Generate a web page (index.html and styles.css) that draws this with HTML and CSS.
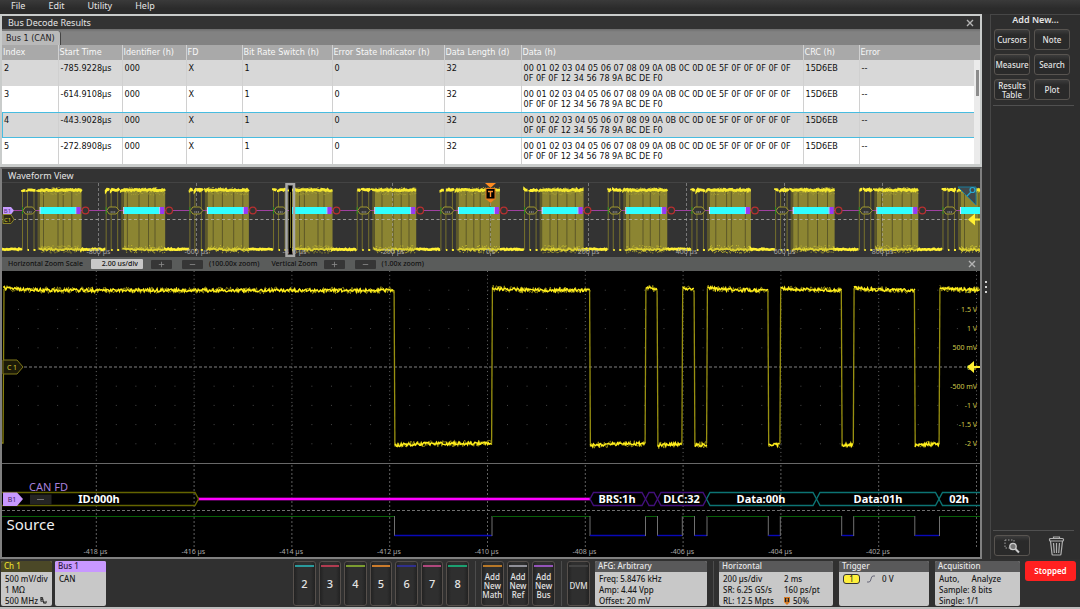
FILE: index.html
```html
<!DOCTYPE html>
<html lang="en">
<head>
<meta charset="utf-8">
<title>Bus Decode Results</title>
<link rel="stylesheet" href="styles.css">
</head>
<body>
<nav class="menubar">
  <button class="menu">File</button>
  <button class="menu">Edit</button>
  <button class="menu">Utility</button>
  <button class="menu">Help</button>
</nav>

<div class="main">
  <main class="workspace">
    <section class="results">
      <header class="titlebar">
        <h2 class="title">Bus Decode Results</h2>
        <button class="close" aria-label="Close results">
          <svg viewBox="0 0 8 8" class="x-icon"><path d="M1 1L7 7M7 1L1 7"/></svg>
        </button>
      </header>
      <div class="tabs"><button class="tab">Bus 1 (CAN)</button></div>
      <div class="table-wrap">
        <table class="decode">
          <colgroup>
            <col class="c-index"><col class="c-time"><col class="c-id"><col class="c-fd"><col class="c-brs">
            <col class="c-esi"><col class="c-len"><col class="c-data"><col class="c-crc"><col>
          </colgroup>
          <thead>
            <tr><th>Index</th><th>Start Time</th><th>Identifier (h)</th><th>FD</th><th>Bit Rate Switch (h)</th><th>Error State Indicator (h)</th><th>Data Length (d)</th><th>Data (h)</th><th>CRC (h)</th><th>Error</th></tr>
          </thead>
          <tbody>
            <tr><td>2</td><td>-785.9228µs</td><td>000</td><td>X</td><td>1</td><td>0</td><td>32</td><td>00 01 02 03 04 05 06 07 08 09 0A 0B 0C 0D 0E 5F 0F 0F 0F 0F 0F<br>0F 0F 0F 12 34 56 78 9A BC DE F0</td><td>15D6EB</td><td>--</td></tr>
            <tr><td>3</td><td>-614.9108µs</td><td>000</td><td>X</td><td>1</td><td>0</td><td>32</td><td>00 01 02 03 04 05 06 07 08 09 0A 0B 0C 0D 0E 5F 0F 0F 0F 0F 0F<br>0F 0F 0F 12 34 56 78 9A BC DE F0</td><td>15D6EB</td><td>--</td></tr>
            <tr class="selected"><td>4</td><td>-443.9028µs</td><td>000</td><td>X</td><td>1</td><td>0</td><td>32</td><td>00 01 02 03 04 05 06 07 08 09 0A 0B 0C 0D 0E 5F 0F 0F 0F 0F 0F<br>0F 0F 0F 12 34 56 78 9A BC DE F0</td><td>15D6EB</td><td>--</td></tr>
            <tr><td>5</td><td>-272.8908µs</td><td>000</td><td>X</td><td>1</td><td>0</td><td>32</td><td>00 01 02 03 04 05 06 07 08 09 0A 0B 0C 0D 0E 5F 0F 0F 0F 0F 0F<br>0F 0F 0F 12 34 56 78 9A BC DE F0</td><td>15D6EB</td><td>--</td></tr>
          </tbody>
        </table>
        <div class="scroll-track"><div class="scroll-thumb"></div></div>
      </div>
    </section>

    <section class="wave">
      <header class="titlebar wave-title"><h2 class="title">Waveform View</h2></header>
      <svg class="plot overview" id="overview" viewBox="2 183 978 74"></svg>
      <div class="zoombar">
        <label class="zoom-label" for="hscale">Horizontal Zoom Scale</label>
        <input class="zoom-input" id="hscale" value="2.00 us/div">
        <button class="step" aria-label="Zoom in horizontally"><svg viewBox="0 0 9 9"><path d="M4.500 1V8M1 4.500H8"/></svg></button>
        <button class="step" aria-label="Zoom out horizontally"><svg viewBox="0 0 9 9"><path d="M1 4.500H8"/></svg></button>
        <span class="zoom-label">(100.00x zoom)</span>
        <span class="zoom-label vertical">Vertical Zoom</span>
        <button class="step" aria-label="Zoom in vertically"><svg viewBox="0 0 9 9"><path d="M4.500 1V8M1 4.500H8"/></svg></button>
        <button class="step" aria-label="Zoom out vertically"><svg viewBox="0 0 9 9"><path d="M1 4.500H8"/></svg></button>
        <span class="zoom-label">(1.00x zoom)</span>
        <button class="close zoom-close" aria-label="Close zoom">
          <svg viewBox="0 0 8 8" class="x-icon"><path d="M1 1L7 7M7 1L1 7"/></svg>
        </button>
      </div>
      <svg class="plot detail" id="detail" viewBox="2 271 978 286"></svg>
    </section>
  </main>

  <div class="splitter"><i class="dot"></i><i class="dot"></i><i class="dot"></i></div>

  <aside class="side">
    <h2 class="side-title">Add New...</h2>
    <div class="side-grid">
      <button class="key">Cursors</button>
      <button class="key">Note</button>
      <button class="key">Measure</button>
      <button class="key">Search</button>
      <button class="key">Results Table</button>
      <button class="key">Plot</button>
    </div>
    <div class="side-tools">
      <button class="key" aria-label="Zoom to region">
        <svg class="tool-icon" viewBox="0 0 18 16">
          <path d="M2 2H11V10H2Z" fill="none" stroke="#a0a0a0" stroke-dasharray="1.500 1.500"/>
          <circle cx="10" cy="8.500" r="3.200" fill="#777" stroke="#ccc" stroke-width="1.300"/>
          <path d="M12.500 11L16 14.500" stroke="#ccc" stroke-width="2"/>
        </svg>
      </button>
      <button class="trash" aria-label="Delete">
        <svg viewBox="0 0 17 20">
          <g fill="none" stroke="#b0b0b0" stroke-width="1.200">
            <path d="M5.500 2.500V1H11.500V2.500"/><rect x="1.500" y="2.500" width="14" height="2.500" rx="1"/>
            <path d="M2.500 5L4 18Q4 19 5 19H12Q13 19 13 18L14.500 5M5.500 7L6.300 17M8.500 7V17M11.500 7L10.700 17"/>
          </g>
        </svg>
      </button>
    </div>
  </aside>
</div>

<footer class="bottombar">
  <section class="badge ch1">
    <h3 class="badge-head">Ch 1</h3>
    <div class="badge-body"><span>500 mV/div</span><span>1 MΩ</span><span>500 MHz <svg class="bw" viewBox="0 0 8 8"><path d="M1 0V5M1 .6H3V2.500H1M1 2.500H3.500V4.800H1M4 4.500V7H5.500V5M5.500 7H7V4.500" fill="none" stroke="#222"/></svg></span></div>
  </section>
  <section class="badge bus1">
    <h3 class="badge-head">Bus 1</h3>
    <div class="badge-body"><span>CAN</span></div>
  </section>

  <div class="channels">
    <button class="chan teal">2</button><button class="chan red">3</button><button class="chan olive">4</button><button class="chan orange">5</button><button class="chan blue">6</button><button class="chan pink">7</button><button class="chan green">8</button>
  </div>
  <i class="sep"></i>
  <div class="adders">
    <button class="chan small amber">Add New Math</button><button class="chan small grey">Add New Ref</button><button class="chan small violet">Add New Bus</button>
  </div>
  <i class="sep"></i>
  <button class="chan small dvm dark">DVM</button>
  <section class="badge afg">
    <h3 class="badge-head">AFG: Arbitrary</h3>
    <div class="badge-body"><span>Freq: 5.8476 kHz</span><span>Amp: 4.44 Vpp</span><span>Offset: 20 mV</span></div>
  </section>
  <i class="sep"></i>
  <section class="badge horizontal">
    <h3 class="badge-head">Horizontal</h3>
    <div class="badge-body two">
      <span>200 µs/div</span><span>2 ms</span>
      <span>SR: 6.25 GS/s</span><span>160 ps/pt</span>
      <span>RL: 12.5 Mpts</span><span><svg class="tpos" viewBox="0 0 6 8"><path d="M0 0H6V5L3 8L0 5Z" fill="#d87820"/><path d="M1 1H5V5H1Z" fill="#222"/><path d="M2 2H4M3 2V5" stroke="#ffa040" fill="none"/></svg>50%</span>
    </div>
  </section>
  <section class="badge trigger">
    <h3 class="badge-head">Trigger</h3>
    <div class="badge-body"><div class="trig-row"><b class="source">1</b><svg class="slope" viewBox="0 0 10 8"><path d="M1 7H3Q4.500 7 5 4Q5.500 1 7 1H9" fill="none" stroke="#667"/></svg><span>0 V</span></div></div>
  </section>
  <section class="badge acquisition">
    <h3 class="badge-head">Acquisition</h3>
    <div class="badge-body"><span class="spread">Auto,<span>Analyze</span></span><span>Sample: 8 bits</span><span>Single: 1/1</span></div>
  </section>
  <button class="stopped">Stopped</button>
</footer>
<script src="plots.js"></script>
</body>
</html>
```
FILE: styles.css
```css
* { box-sizing: border-box; }
body {
  margin: 0;
  min-height: 100vh;
  display: flex;
  flex-direction: column;
  background: #303030;
  color: #e4e4e4;
  font-family: "Noto Sans", "DejaVu Sans", sans-serif;
  font-size: 9px;
  line-height: 10px;
  border-bottom: 2px solid #bdbdbd;
}
button, input { font: inherit; color: inherit; margin: 0; padding: 0; border: 0; background: none; }
h2, h3 { margin: 0; font-size: inherit; font-weight: 400; }
svg { display: block; }

.menubar { display: flex; gap: 23px; height: 14px; padding: 0 11px; background: linear-gradient(#3a3a3a, #2b2b2b 60%); }
.menu { line-height: 12px; height: 12px; }

.main { display: flex; flex: 1; }
.workspace { flex: 1; min-width: 0; }

.results { border: 2px solid #c9cccb; border-bottom-width: 3px; }
.titlebar { display: flex; align-items: center; justify-content: space-between; height: 13px; padding: 0 6px; background: #333; }
.close { width: 8px; height: 8px; }
.x-icon { width: 8px; height: 8px; fill: none; stroke: #b4b4b4; stroke-width: 1.4; }
.tabs { display: flex; align-items: flex-end; height: 16px; background: linear-gradient(#6e6e6e, #828282 3px); }
.tab { height: 14px; padding: 0 5px 0 4px; border-radius: 0 3px 0 0; border-right: 1px solid #444; background: #b9b9b9; color: #222; line-height: 12px; font-family: "DejaVu Sans Condensed", "DejaVu Sans", sans-serif; }

.table-wrap { position: relative; }
.decode { width: 100%; table-layout: fixed; border-collapse: collapse; color: #101010; font-family: "DejaVu Sans Condensed", "DejaVu Sans", sans-serif; font-size: 9px; line-height: 10px; }
.decode th, .decode td { text-align: left; vertical-align: top; white-space: nowrap; border-right: 1px solid #d0d0d0; }
.decode th:last-child, .decode td:last-child { border-right: 0; }
.decode th { height: 15px; padding: 2px 0 0 1px; background: #a9a9a9; color: #f8f8f8; font-weight: 400; }
.decode td { height: 26px; padding: 3px 0 3px 2px; background: #fff; }
.decode tr:nth-child(odd) td { background: #d8d8d8; }
.decode .selected { outline: 1px solid #48bce0; outline-offset: -1px; }
.c-index { width: 56px; } .c-time { width: 64px; } .c-id { width: 64px; } .c-fd { width: 56px; } .c-brs { width: 90px; }
.c-esi { width: 112px; } .c-len { width: 77px; } .c-data { width: 282px; } .c-crc { width: 56px; }
.scroll-track { position: absolute; top: 15px; right: 0; bottom: 0; width: 6px; padding: 10px 1px 0 2px; background: #ebebeb; }
.scroll-thumb { height: 26px; background: #8c8c8c; }

.wave { border: 2px solid #808080; border-top-color: #606060; }
.wave-title { height: 14px; border-bottom: 1px solid #444; }
.plot { width: 100%; height: auto; font-family: "Noto Sans", sans-serif; }
.overview { background: #333; }
.detail { background: #000; }
.zoombar { display: flex; align-items: center; height: 14px; padding: 0 4px 0 6px; background: #5a5c5b; color: #101010; font-size: 7px; font-weight: 500; }
.zoom-input { width: 52px; height: 10px; margin: 0 8px; padding-right: 5px; border-radius: 1px; background: #c8c8c8; color: #111; text-align: right; }
.step { width: 21px; height: 9px; margin-right: 10px; border-radius: 1px; background: #363636; }
.step + .zoom-label { margin-left: -4px; }
.step svg { width: 7px; height: 7px; margin: auto; fill: none; stroke: #8c8c8c; }
.zoombar .vertical { margin: 0 6px 0 12px; }
.zoom-close { margin-left: auto; }

.splitter { width: 8px; display: flex; flex-direction: column; align-items: center; gap: 3px; padding-top: 267px; }
.dot { width: 2px; height: 2px; background: #d0d0d0; }

.side { width: 90px; display: flex; flex-direction: column; border: 1px solid #474747; border-width: 1px 0 0 1px; background: #2e2e2e; padding: 0 6px 3px 2px; }
.side-title { padding: 0 0 4px 4px; text-align: center; font-weight: 600; }
.side-grid { display: grid; grid-template-columns: 36px 36px; gap: 4px; padding: 0 0 5px 1px; border-bottom: 1px solid #505050; }
.key { height: 21px; border: 1px solid #585450; border-radius: 3px; background: linear-gradient(#3c3c3c, #2a2a2a 5px); font-size: 8px; font-weight: 500; line-height: 9px; text-align: center; }
.side-tools { margin-top: auto; display: grid; grid-template-columns: 36px 36px; gap: 4px; padding: 4px 0 0 1px; border-top: 1px solid #505050; align-items: center; }
.tool-icon { width: 18px; height: 16px; margin: auto; }
.trash { display: flex; justify-content: center; padding-left: 8px; }
.trash svg { width: 17px; height: 20px; }

.bottombar { display: flex; height: 48px; padding: 2px 4px 1px 1px; font-size: 8px; font-weight: 500; }
.badge { border-radius: 2px; overflow: hidden; background: #c8c8c8; color: #1a1a1a; }
.badge-head { height: 11px; padding: 0 3px; background: #59595a; color: #e8e8e8; line-height: 10px; font-size: 8px; font-weight: 500; }
.badge-body { display: flex; flex-direction: column; gap: 1px; padding: 2px 4px 0; white-space: nowrap; }
.ch1 { width: 51px; margin-right: 3px; }
.ch1 .badge-body { padding-right: 0; }
.ch1 .badge-head { background: #4b4827; color: #e6dc2c; }
.ch1 .bw { display: inline-block; width: 7px; height: 7px; }
.bus1 { width: 51px; }
.bus1 .badge-head { background: #c898ff; color: #301c48; }
.channels { width: 176px; margin-left: auto; display: grid; grid-template-columns: repeat(7, 1fr); gap: 3px; }
.adders { width: 74px; display: grid; grid-template-columns: repeat(3, 1fr); gap: 3px; }
.sep { width: 1px; margin: 0 5px 0 6px; background: #4c4c4c; }
.chan { display: flex; align-items: center; justify-content: center; position: relative; border: 1px solid #56504c; border-radius: 3px; background: linear-gradient(90deg, #222, #2f2f2f 20%, #2f2f2f 80%, #222); font-size: 11px; text-align: center; }
.chan::before { content: ""; position: absolute; top: 3px; left: 1px; right: 1px; height: 2px; background: var(--mark); }
.small { font-size: 8px; line-height: 9px; padding-top: 3px; }
.teal { --mark: #2a9a9c; } .red { --mark: #b03c50; } .olive { --mark: #7c9c30; } .orange { --mark: #cc7c2c; } .blue { --mark: #30308c; }
.pink { --mark: #b0487c; } .green { --mark: #1ca070; } .amber { --mark: #b87828; } .grey { --mark: #909098; } .violet { --mark: #9454b8; } .dark { --mark: #444; }
.dvm { width: 23px; margin-right: 5px; }
.afg { width: 112px; }
.horizontal { width: 114px; margin-right: 6px; }
.two { display: grid; grid-template-columns: 60px 1fr; }
.tpos { display: inline-block; width: 6px; height: 8px; margin-right: 3px; vertical-align: -1px; }
.trigger { width: 90px; margin-right: 6px; }
.trig-row { display: flex; align-items: center; gap: 6px; }
.source { width: 17px; height: 10px; border: 1px solid #333; border-radius: 3px; background: #fff03c; text-align: center; line-height: 8px; font-weight: 400; }
.slope { width: 10px; height: 8px; }
.acquisition { width: 85px; margin-right: 5px; }
.spread span { margin-left: 12px; }
.stopped { width: 51px; height: 20px; border-radius: 3px; background: #ff2020; color: #fff; font-size: 8px; font-weight: 600; }

.tick { font-size: 7px; fill: #a8a8a8; text-anchor: middle; }
.volt { font-size: 7px; fill: #d0c848; text-anchor: end; }
.frame { font-size: 11px; font-weight: 700; fill: #fff; text-anchor: middle; }
.bus-name { font-size: 11px; fill: #a880dc; }
.source-name { font-size: 15px; fill: #f0f0f0; }
.tag { font-size: 7px; text-anchor: middle; }
.tag-small { font-size: 6px; text-anchor: middle; }
```
FILE: plots.js
```js
let seed = 7;
const rnd = () => { seed = (seed * 16807) % 2147483647; return seed / 2147483647; };
const path = (d, stroke, width = 1, extra = '') =>
  `<path d="${d}" fill="none" stroke="${stroke}" stroke-width="${width}" ${extra}/>`;
const rect = (x, y, w, h, fill, extra = '') =>
  `<rect x="${x}" y="${y}" width="${w}" height="${h}" fill="${fill}" ${extra}/>`;
const text = (x, y, cls, s, extra = '') => `<text x="${x}" y="${y}" class="${cls}" ${extra}>${s}</text>`;

/* Jagged horizontal band between two x positions */
function band(x0, x1, y, amp, step) {
  let d = `M${x0} ${y}`;
  for (let x = x0; x <= x1; x += step) d += `L${x.toFixed(1)} ${(y + (rnd() - .5) * 2 * amp).toFixed(1)}`;
  return d;
}

function drawOverview() {
  let s = '';
  for (let n = 0; n < 12; n++) {
    const x = 22.5 + 83.68 * n;
    const right = Math.min(x + 59, 980);
    s += rect(x + 17.5, 190, right - x - 17.5, 60, '#8c8532');
    s += rect(x + 15, 190, 2.5, 60, '#5c582a');
    [0, 5, 11.5].forEach(k => s += path(`M${x + k} 190V250`, '#77712c', 1));
    for (let k = 0; k < 4; k++) s += path(`M${(x + 21 + k * 9 + rnd() * 6).toFixed(1)} 192V248`, '#504c26', .8);
    for (let k = 18; k < 59; k += 1) {
      if (rnd() > .35) s += rect(x + k, 191 + rnd() * 3.5, 1, 1, '#a8a034');
      if (rnd() > .35) s += rect(x + k, 245 + rnd() * 3.5, 1, 1, '#c4ba30');
      if (rnd() > .55) s += rect(x + k, 187 + rnd() * 2, 1, 1, '#b8ae30');
      if (rnd() > .55) s += rect(x + k, 250.5 + rnd() * 2, 1, 1, '#b8ae30');
    }
    s += path(band(x, Math.min(x + 3.5, 980), 190, .8, 1), '#fff032', 2.8);
    s += path(band(x + 5, Math.min(x + 13, 980), 190, .8, 1), '#fff032', 2.8);
    s += path(band(x + 15, right, 190, .8, 1), '#f4e830', 2.6);
    s += path(band(x + 17, right, 249.5, 1, 1), '#dcd030', 1.8);
    s += path(`M${x + 5} 250h1.500M${x + 11} 250h2`, '#fff032', 2);
    if (x + 59 < 980) s += path(band(x + 59, Math.min(x + 83.7, 980), 249.3, .6, 1), '#fff032', 2.6);
  }
  s += path(band(2, 22, 249.3, .6, 1), '#fff032', 2.6);
  s += path('M2 219.500H980', '#c0c0c0', 1, 'stroke-dasharray="3 2.500" opacity=".7"');
  for (let k = 0; k < 9; k++) s += path(`M${98.5 + 98 * k} 183V257`, '#b0b0b0', 1, 'stroke-dasharray="3 2" opacity=".55"');
  ['-800 µs', '-600 µs', '-400 µs', '-200 µs', '0 s', '200 µs', '400 µs', '600 µs', '800 µs']
    .forEach((t, k) => s += text(98.5 + 98 * k, 254, 'tick', t));
  s += path('M14 210.500H980', '#a040a0', 1);
  for (let n = 0; n < 12; n++) {
    const x = 22.5 + 83.68 * n;
    s += path(`M${x} 207V214`, '#208c20', 1);
    s += `<path d="M${x + .5} 210.500L${x + 3} 207H${x + 10}L${x + 13} 210.500L${x + 10} 214H${x + 3}Z" fill="#333" stroke="#a09830"/>`;
    s += path(`M${x + 4.5} 212H${x + 9}`, '#ccc', 1, 'stroke-dasharray="1 .8"');
    s += rect(x + 17, 207, 1.5, 7, '#e8d0ff');
    s += rect(x + 18, 207, 36, 7, '#30ffff');
    s += rect(x + 53, 207, 1, 7, '#d8b0ff') + rect(x + 54, 207, 4, 7, '#9838f8');
    s += `<circle cx="${x + 63}" cy="210.500" r="3.300" fill="#333" stroke="#b83030" stroke-width="1.200"/>`;
  }
  s += `<path d="M3 207H11L14 210.500L11 214.500H3Z" fill="#c89cff"/>` + text(7.5, 213, 'tag-small', 'B1', 'fill="#503080"');
  s += `<path d="M3 214.500H11L14 219.500L11 223.500H3Z" fill="#2c2a16" stroke="#8c8428"/>` + text(7.5, 221.5, 'tag-small', 'C1', 'fill="#d8cc30"');
  s += rect(289, 186, 3, 68, '#000') + path('M290.500 192V248', '#6c6820', 1);
  s += rect(286.5, 184, 7.5, 72, 'none', 'stroke="#a8a8a8" stroke-width="2.500"');
  s += `<path d="M485 183H496L490.500 188Z" fill="#ff8c20"/><path d="M486 188.500H495V199L490.500 203L486 199Z" fill="#f08020"/>`;
  s += rect(486, 188.5, 9, 10.5, '#000', 'stroke="#e07820"') + path('M488 191.500H493M490.500 191V197', '#ff9030', 1.4);
  s += `<path d="M958 187H976V205Z" fill="#40484c" stroke="#187c9c"/>`;
  s += `<circle cx="972.500" cy="190" r="2.500" fill="none" stroke="#28a8d0" stroke-width="1.200"/>` + path('M971 192L967 196', '#28a8d0', 1.3);
  s += `<path d="M968 219.500L975 213.500V218.500H980V220.500H975V225.500Z" fill="#fff032"/>`;
  return s;
}

const EDGES = [394.5, 492, 590, 645.5, 657.5, 682.3, 694.5, 707, 768.3, 780.3, 841.7, 853.7, 914.8, 939.5];
const HIGH = 290.3, LOW = 443.5;

function drawTrace() {
  let s = path('M2 443H3L4 289', '#8c8410', 1.3);
  let start = 3.5, up = true;
  for (const end of [...EDGES, 980]) {
    const base = up ? HIGH : LOW, kick = up ? -2.4 : 2;
    const line = (amp, step) => {
      let d = '';
      for (let x = start; x <= end; x += step) {
        const y = base + kick * Math.exp((start - x) / 18) + (rnd() - .5) * 2 * amp;
        d += (d ? 'L' : 'M') + x.toFixed(1) + ' ' + y.toFixed(1);
      }
      return d;
    };
    s += path(line(3.4, 1), '#a89e14', .8);
    s += path(line(1.6, .8), '#ffee1c', 1.4);
    if (end < 980) s += path(`M${end - .4} ${up ? HIGH : LOW}L${end + .4} ${up ? LOW + 3 : HIGH - 2}`, '#989010', 1.3);
    start = end + .3;
    up = !up;
  }
  return s;
}

function drawDetail() {
  let s = '';
  for (let k = 0; k < 10; k++) {
    const x = (96.3 + 97.8 * k).toFixed(1);
    s += path(`M${x} 271V462`, '#686868', 1, 'stroke-dasharray="1 2.850"');
    s += path(`M${x} 465V549`, '#606060', 1, 'stroke-dasharray="2 2"');
  }
  for (let r = -4; r <= 4; r++) if (r) s += path(`M18 ${367 + 19.2 * r}H972`, '#484848', 1, 'stroke-dasharray="1 18.560"');
  s += path('M24 367H966', '#808080', 1, 'stroke-dasharray="3 2"');
  [['2 V', -4], ['1.5 V', -3], ['1 V', -2], ['500 mV', -1], ['0 V', 0], ['-500 mV', 1], ['-1 V', 2], ['-1.5 V', 3], ['-2 V', 4]]
    .forEach(([t, r]) => s += text(977, 369.5 + 19.2 * r, 'volt', t));
  s += drawTrace();
  s += `<path d="M967 367L974 361V366H980V368H974V373Z" fill="#fff032"/>`;
  s += `<path d="M3 360H17L23 367L17 374H3Z" fill="#1c1a08" stroke="#807818"/>` + text(12, 369.5, 'tag', 'C 1', 'fill="#d8cc30"');
  s += path('M2 463.500H980', '#686868');

  const frame = (x0, x1, color, label, cx) => {
    const l = x0 < 3 ? `M2 492.500` : `M${x0} 499L${x0 + 3.5} 492.500`;
    const back = x0 < 3 ? 'L2 505.500' : `L${x0 + 3.5} 505.500L${x0} 499`;
    const r = x1 >= 980 ? 'L980 492.500M980 505.500' : `L${x1 - 3.5} 492.500L${x1} 499L${x1 - 3.5} 505.500`;
    return path(l + r + back, color, 1.4) + (label ? text(cx, 503, 'frame', label) : '');
  };
  s += path('M198 499H590', '#6c006c', 3.4) + path('M198 499H590', '#ff00ff', 2);
  s += frame(2, 198.5, '#646400', 'ID:000h', 99);
  s += frame(590, 645.5, '#42107c', 'BRS:1h', 617);
  s += frame(645.5, 657.5, '#42107c');
  s += frame(657.5, 706.5, '#42107c', 'DLC:32', 681.5);
  s += frame(706.5, 816.5, '#0c7474', 'Data:00h', 761);
  s += frame(816.5, 939, '#0c7474', 'Data:01h', 878);
  s += frame(939, 980, '#0c7474', '02h', 959);
  s += `<path d="M3 492.500H17L23 499L17 506H3Z" fill="#c898ff"/>` + text(12, 501.5, 'tag', 'B1', 'fill="#402060"');
  s += rect(30, 494.5, 21.5, 10, '#242424') + path('M37 499.500H44', '#777');
  s += text(29, 491, 'bus-name', 'CAN FD');
  s += path('M2 510.500H973', '#707070', 1, 'stroke-dasharray="3 2"');

  let start = 2, up = true;
  for (const end of [...EDGES, 980]) {
    s += path(`M${start} ${up ? 516.5 : 535.5}H${end}`, up ? '#086008' : '#0808b8', up ? 1 : 1.4);
    if (end < 980) s += path(`M${end} 516V536`, '#707070', 1);
    start = end;
    up = !up;
  }
  s += text(6.5, 530, 'source-name', 'Source');
  for (let k = 0; k < 9; k++) s += text((95.5 + 97.8 * k).toFixed(1), 554, 'tick', `-${418 - 2 * k} µs`);
  return s;
}

document.getElementById('overview').innerHTML = drawOverview();
document.getElementById('detail').innerHTML = drawDetail();
```
